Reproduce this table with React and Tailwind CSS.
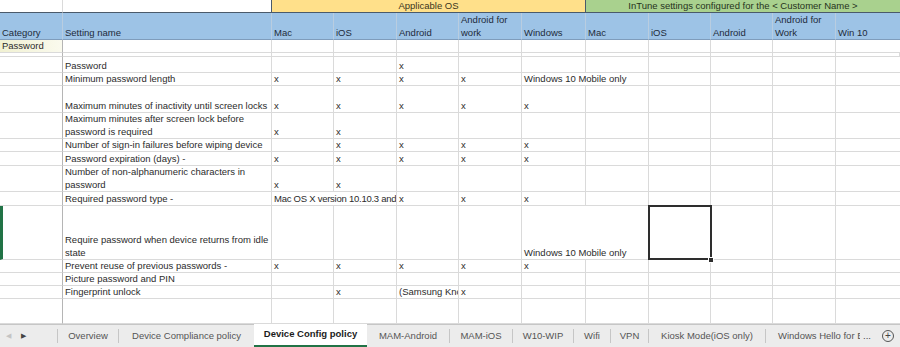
import React from 'react'

const font = { fontFamily: '"Liberation Sans", Arial, sans-serif' }

// widths of the 12 sheet columns
const gridCols = 'grid-cols-[63px_209px_62px_63px_62px_63px_64px_63px_62px_62px_63px_64px]'
const gridRows = 'grid-rows-[13px_27px_13px_4px_16px_13px_27px_26px_13px_14px_26px_14px_54px_13px_13px_13px_25px]'

const X = 'x'
const body = [
  { name: 'Password', v: ['', '', X, '', ''] },
  { name: 'Minimum password length', v: [X, X, X, X, { t: 'Windows 10 Mobile only', span: 2 }] },
  { name: 'Maximum minutes of inactivity until screen locks', v: [X, X, X, X, X] },
  { name: 'Maximum minutes after screen lock before password is required', wrap: true, v: [X, X, '', '', ''] },
  { name: 'Number of sign-in failures before wiping device', v: ['', X, X, X, X] },
  { name: 'Password expiration (days) -', v: [X, X, X, X, X] },
  { name: 'Number of non-alphanumeric characters in password', wrap: true, v: [X, X, '', '', ''] },
  { name: 'Required password type -', v: [{ t: 'Mac OS X version 10.10.3 and', span: 2, tight: true }, X, X, X] },
  { name: 'Require password when device returns from idle state', wrap: true, sel: true, v: ['', '', '', '', { t: 'Windows 10 Mobile only', span: 2 }] },
  { name: 'Prevent reuse of previous passwords -', v: [X, X, X, X, X] },
  { name: 'Picture password and PIN', v: ['', '', '', '', ''] },
  { name: 'Fingerprint unlock', v: ['', X, '(Samsung Knox', X, ''] },
  { name: '', v: ['', '', '', '', ''] },
]

function Cell({ children, span, wrap, className = '' }) {
  return (
    <div
      className={`flex items-end overflow-hidden border-r border-b border-[#dadada] px-[2px] text-[9.5px] text-[#2b2b2b] ${
        span === 2 ? 'col-span-2' : ''
      } ${wrap ? 'whitespace-normal pb-0 leading-[13px]' : 'whitespace-nowrap pb-[1px] leading-[10px]'} ${className}`}
    >
      {children}
    </div>
  )
}

function HeadCell({ children, className = '' }) {
  return (
    <div className={`flex items-end border-r border-b border-r-[#b9cde0] border-b-[#7f9cbb] bg-[#9dc3e6] px-[2px] text-[9.5px] leading-[13px] text-[#1d2b3a] ${className}`}>
      <span>{children}</span>
    </div>
  )
}

// sheet tabs with their widths in the tab strip
const tabs = [
  { t: 'Overview', w: 'w-[60px]' },
  { t: 'Device Compliance policy', w: 'w-[135px]', noSep: true },
  { t: 'Device Config policy', w: 'w-[113px]', active: true },
  { t: 'MAM-Android', w: 'w-[82px]' },
  { t: 'MAM-iOS', w: 'w-[62px]' },
  { t: 'W10-WIP', w: 'w-[60px]' },
  { t: 'Wifi', w: 'w-[36px]' },
  { t: 'VPN', w: 'w-[37px]' },
  { t: 'Kiosk Mode(iOS only)', w: 'w-[116px]' },
]

export default function App() {
  return (
    <div className="flex h-[347px] w-[900px] flex-col overflow-hidden bg-white" style={font}>
      <div className={`grid h-[324px] shrink-0 ${gridCols} ${gridRows}`}>
        {/* top merged header */}
        <div className="border-r border-b border-r-[#dadada] border-b-[#4a5a6a]" />
        <div className="border-r border-b border-r-[#4a5a6a] border-b-[#4a5a6a]" />
        <div className="col-span-5 flex items-end justify-center border-r border-b border-r-[#4a5a6a] border-b-[#4a5a6a] bg-[#ffe08a] text-[9.5px] leading-[12px] text-[#3a3520]">
          Applicable OS
        </div>
        <div className="col-span-5 flex items-end justify-center border-b border-b-[#4a5a6a] bg-[#a9d18e] text-[9.5px] leading-[12px] text-[#26331c]">
          InTune settings configured for the &lt; Customer Name &gt;
        </div>

        {/* column header */}
        <HeadCell className="border-r-[#3f5266]">Category</HeadCell>
        <HeadCell className="border-r-[#3f5266]">Setting name</HeadCell>
        <HeadCell>Mac</HeadCell>
        <HeadCell>iOS</HeadCell>
        <HeadCell>Android</HeadCell>
        <HeadCell>Android for<br />work</HeadCell>
        <HeadCell className="border-r-[#3f5266]">Windows</HeadCell>
        <HeadCell>Mac</HeadCell>
        <HeadCell>iOS</HeadCell>
        <HeadCell>Android</HeadCell>
        <HeadCell>Android for<br />Work</HeadCell>
        <HeadCell className="border-r-0">Win 10</HeadCell>

        {/* category row */}
        <Cell className="bg-gradient-to-r from-[#f1f1d2] to-[#fafaee] border-r-[#b5b5b5]">Password</Cell>
        {Array.from({ length: 11 }).map((_, i) => (
          <Cell key={'c' + i} className={i === 10 ? 'border-r-0' : ''} />
        ))}

        {/* thin spacer row */}
        {Array.from({ length: 12 }).map((_, i) => (
          <div key={'t' + i} className={`border-r border-b border-[#dadada] ${i === 0 ? 'border-r-[#b5b5b5]' : ''}`} />
        ))}

        {body.map((row, r) => {
          const cells = []
          cells.push(
            <Cell key="cat" className={`border-r-[#b5b5b5] ${row.sel ? 'border-l-[3px] border-l-[#217346]' : ''}`} />
          )
          cells.push(
            <Cell key="name" wrap={row.wrap}>
              <span>{row.name}</span>
            </Cell>
          )
          let used = 0
          row.v.forEach((v, i) => {
            if (typeof v === 'object') {
              cells.push(
                <Cell key={'v' + i} span={v.span} className={v.tight ? 'tracking-[-0.25px]' : ''}>
                  {v.t}
                </Cell>
              )
              used += v.span
            } else {
              cells.push(<Cell key={'v' + i}>{v}</Cell>)
              used += 1
            }
          })
          for (let i = used; i < 10; i++) {
            const selected = row.sel && i === 6
            cells.push(
              <Cell key={'e' + i} className={`${selected ? 'relative overflow-visible' : ''} ${i === 9 ? 'border-r-0' : ''}`}>
                {selected && (
                  <>
                    <div className="absolute -top-[1px] -left-[1px] h-[55px] w-[64px] border-2 border-[#2e2e2e]" />
                    <div className="absolute -right-[4px] -bottom-[4px] h-[6px] w-[6px] border border-white bg-[#2e2e2e]" />
                  </>
                )}
              </Cell>
            )
          }
          return cells
        })}
      </div>

      {/* sheet tabs */}
      <div className="flex h-[23px] shrink-0 items-stretch whitespace-nowrap border-t border-[#c6c6c6] bg-[#ececec] text-[9.5px] text-[#555]">
        <div className="flex w-[57px] shrink-0 items-center gap-[10px] pl-[6px] text-[7px]">
          <span className="text-[#c4c4c4]">◀</span>
          <span className="text-[#444]">▶</span>
        </div>
        <div className="my-[4px] w-px shrink-0 bg-[#c6c6c6]" />
        {tabs.map((tab) =>
          tab.active ? (
            <div key={tab.t} className={`-mt-px flex shrink-0 items-center justify-center border-b-2 border-[#217346] bg-white font-bold text-[#1c1c1c] ${tab.w}`}>
              {tab.t}
            </div>
          ) : (
            <React.Fragment key={tab.t}>
              <div className={`flex shrink-0 items-center justify-center ${tab.w}`}>{tab.t}</div>
              {!tab.noSep && <div className="my-[4px] w-px shrink-0 bg-[#c6c6c6]" />}
            </React.Fragment>
          )
        )}
        <div className="flex w-[94px] shrink-0 items-center overflow-hidden pl-[12px]">Windows Hello for Business</div>
        <div className="flex w-[16px] shrink-0 items-center pl-[3px] text-[#444]">...</div>
        <div className="flex flex-1 items-center justify-center">
          <span className="flex h-[12px] w-[12px] items-center justify-center rounded-full border border-[#555] text-[10px] leading-none text-[#444]">+</span>
        </div>
      </div>
    </div>
  )
}
